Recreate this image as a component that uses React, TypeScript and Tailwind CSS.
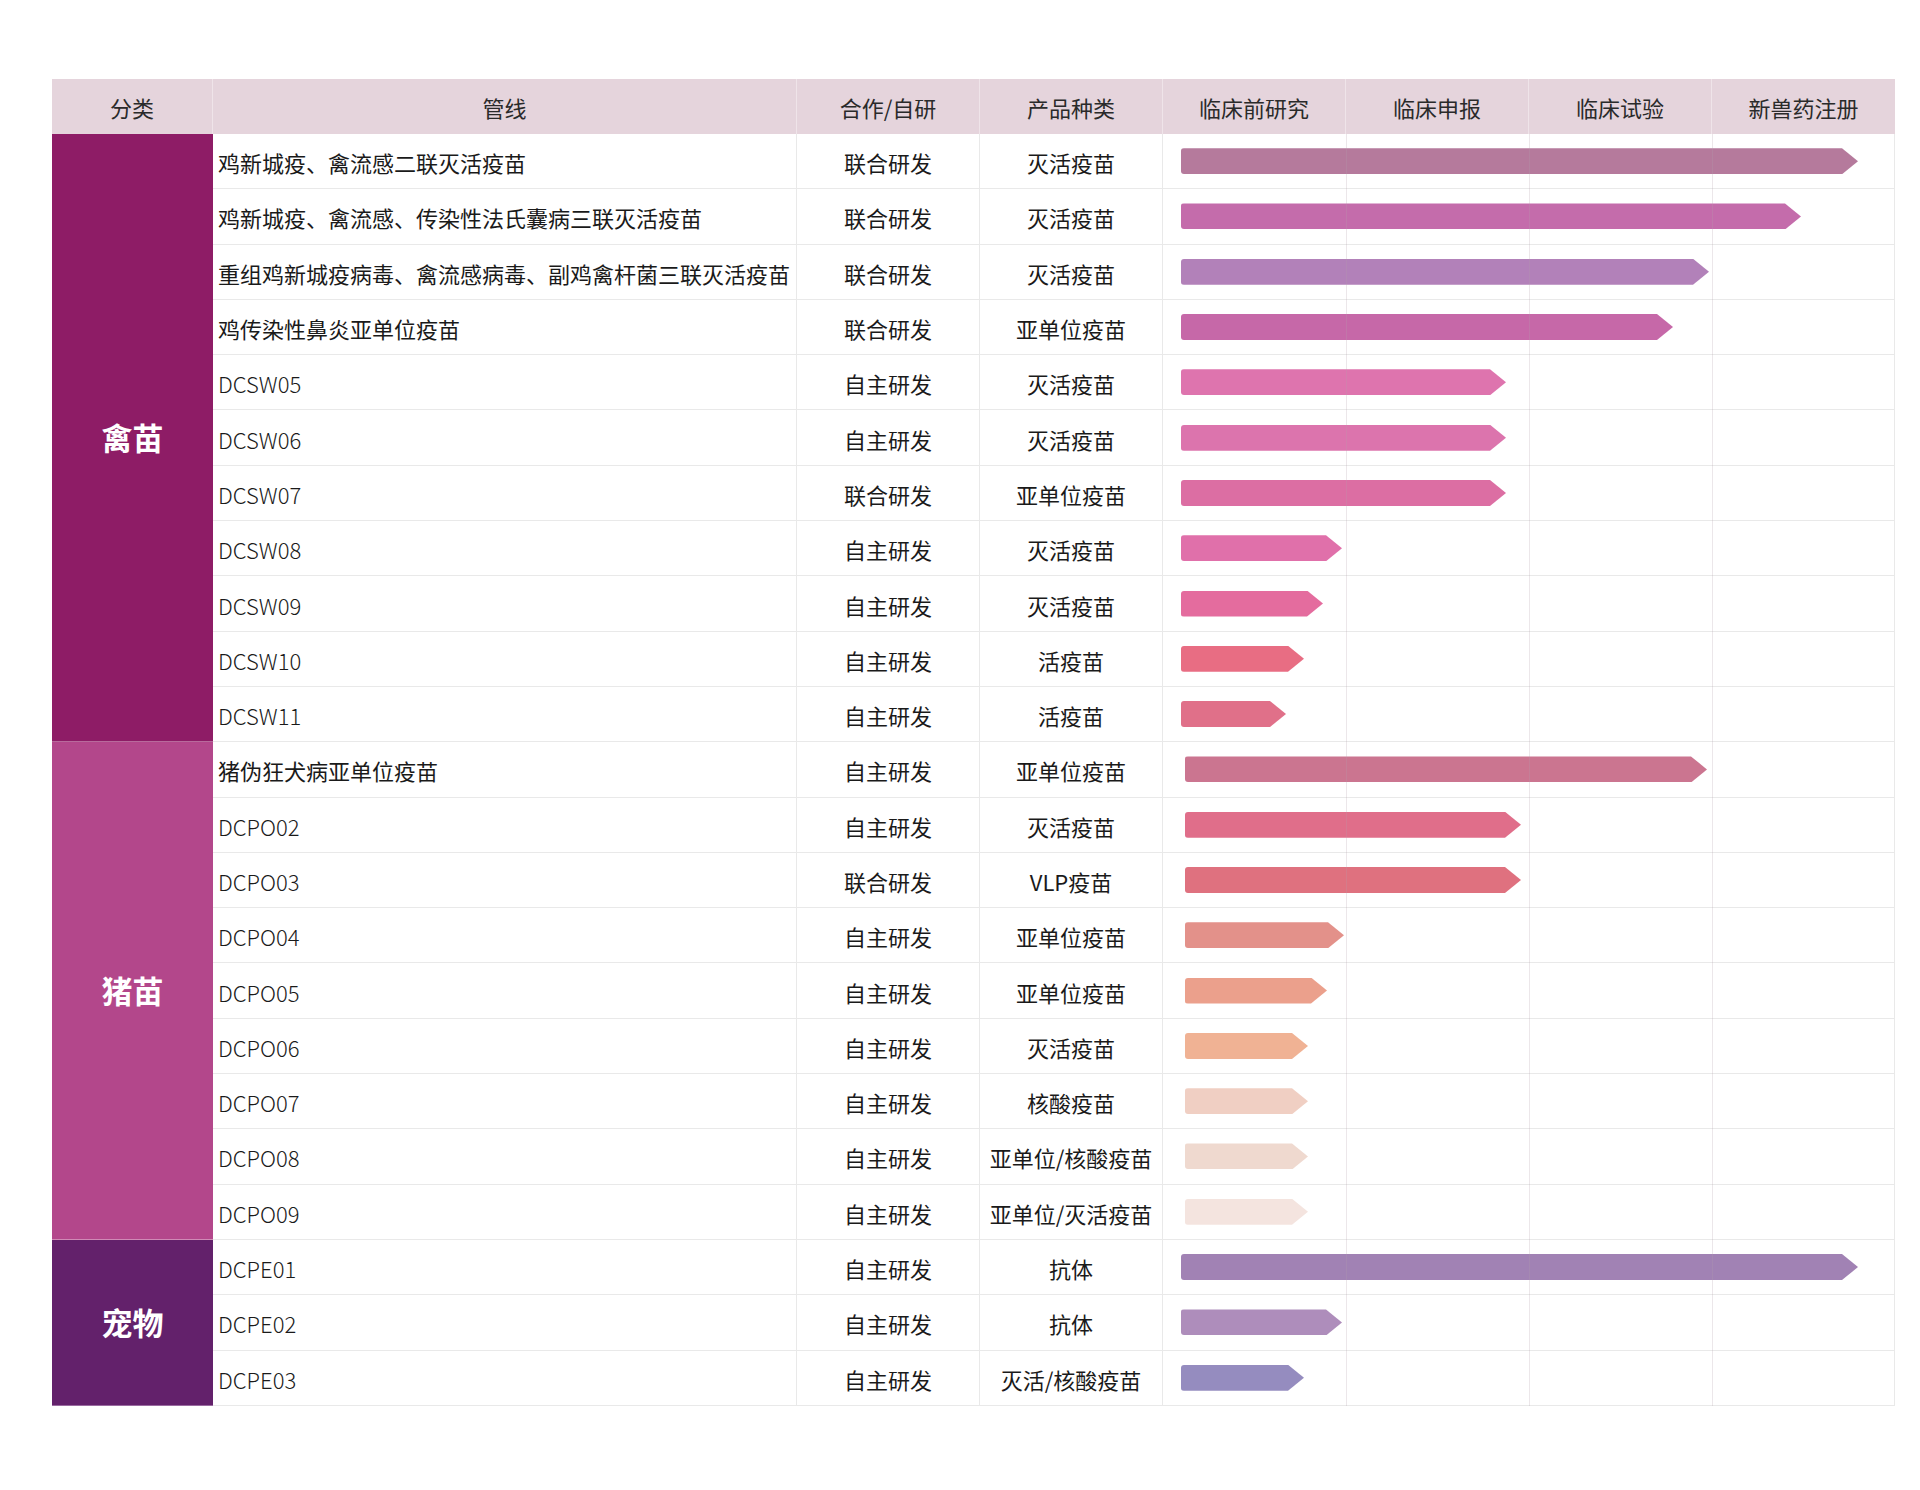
import React from "react";

type Row = { name: string; mode: string; kind: string; w: number; color: string };

const poultry: Row[] = [
  { name: "鸡新城疫、禽流感二联灭活疫苗", mode: "联合研发", kind: "灭活疫苗", w: 677, color: "#b57a9c" },
  { name: "鸡新城疫、禽流感、传染性法氏囊病三联灭活疫苗", mode: "联合研发", kind: "灭活疫苗", w: 620, color: "#c46cab" },
  { name: "重组鸡新城疫病毒、禽流感病毒、副鸡禽杆菌三联灭活疫苗", mode: "联合研发", kind: "灭活疫苗", w: 528, color: "#b281b9" },
  { name: "鸡传染性鼻炎亚单位疫苗", mode: "联合研发", kind: "亚单位疫苗", w: 492, color: "#c668a8" },
  { name: "DCSW05", mode: "自主研发", kind: "灭活疫苗", w: 325, color: "#de74ae" },
  { name: "DCSW06", mode: "自主研发", kind: "灭活疫苗", w: 325, color: "#dc74ad" },
  { name: "DCSW07", mode: "联合研发", kind: "亚单位疫苗", w: 325, color: "#dc6ea3" },
  { name: "DCSW08", mode: "自主研发", kind: "灭活疫苗", w: 161, color: "#e070aa" },
  { name: "DCSW09", mode: "自主研发", kind: "灭活疫苗", w: 142, color: "#e46c9e" },
  { name: "DCSW10", mode: "自主研发", kind: "活疫苗", w: 123, color: "#e86d83" },
  { name: "DCSW11", mode: "自主研发", kind: "活疫苗", w: 105, color: "#e07089" },
];

const pig: Row[] = [
  { name: "猪伪狂犬病亚单位疫苗", mode: "自主研发", kind: "亚单位疫苗", w: 522, color: "#cb7590" },
  { name: "DCPO02", mode: "自主研发", kind: "灭活疫苗", w: 336, color: "#e06e8a" },
  { name: "DCPO03", mode: "联合研发", kind: "VLP疫苗", w: 336, color: "#df717f" },
  { name: "DCPO04", mode: "自主研发", kind: "亚单位疫苗", w: 159, color: "#e3918a" },
  { name: "DCPO05", mode: "自主研发", kind: "亚单位疫苗", w: 142, color: "#eba08c" },
  { name: "DCPO06", mode: "自主研发", kind: "灭活疫苗", w: 123, color: "#f0b294" },
  { name: "DCPO07", mode: "自主研发", kind: "核酸疫苗", w: 123, color: "#f0cfc3" },
  { name: "DCPO08", mode: "自主研发", kind: "亚单位/核酸疫苗", w: 123, color: "#efd9cf" },
  { name: "DCPO09", mode: "自主研发", kind: "亚单位/灭活疫苗", w: 123, color: "#f4e4df" },
];

const pet: Row[] = [
  { name: "DCPE01", mode: "自主研发", kind: "抗体", w: 677, color: "#a182b4" },
  { name: "DCPE02", mode: "自主研发", kind: "抗体", w: 161, color: "#ae8dbb" },
  { name: "DCPE03", mode: "自主研发", kind: "灭活/核酸疫苗", w: 123, color: "#958cbf" },
];

const cellBase = "flex items-center border-b border-r border-[#e9e9e9] bg-white";
const txt = "pt-[3px] text-[22px] text-[#1a1a1a] whitespace-nowrap";

function Bar({ w, color }: { w: number; color: string }) {
  return (
    <div
      className="h-[26px] rounded-l-[3px] [clip-path:polygon(0_0,calc(100%-16px)_0,100%_50%,calc(100%-16px)_100%,0_100%)]"
      style={{ width: w, backgroundColor: color }}
    />
  );
}

function Rows({ rows, pad }: { rows: Row[]; pad: string }) {
  return (
    <>
      {rows.map((r, i) => (
        <React.Fragment key={i}>
          <div className={`${cellBase} ${txt} col-start-2 pl-[5px] ${r.name.startsWith("DC") ? "font-light" : "font-normal"}`}>{r.name}</div>
          <div className={`${cellBase} ${txt} col-start-3 justify-center font-normal`}>{r.mode}</div>
          <div className={`${cellBase} ${txt} col-start-4 justify-center font-normal`}>{r.kind}</div>
          <div className={`${cellBase} col-start-5 col-span-4 ${pad}`}>
            <Bar w={r.w} color={r.color} />
          </div>
        </React.Fragment>
      ))}
    </>
  );
}

export default function App() {
  const font = "font-['Noto_Sans_CJK_SC','Noto_Sans',sans-serif]";
  const head = "flex items-center justify-center pt-[2px] bg-[#e5d4dc] border-r border-[#efe4e9] text-[22px] font-normal text-[#2a2a2a]";
  const cat = "col-start-1 flex items-center justify-center text-[31px] font-bold text-white";
  return (
    <div className={`min-h-[1490px] w-[1920px] bg-white pt-[79px] pl-[52px] ${font}`}>
      <div className="relative w-[1843px] grid grid-cols-[161px_584px_183px_183px_183px_183px_183px_183px] grid-rows-[55px] auto-rows-[55.3px]">
        <div className={head}>分类</div>
        <div className={head}>管线</div>
        <div className={head}>合作/自研</div>
        <div className={head}>产品种类</div>
        <div className={head}>临床前研究</div>
        <div className={head}>临床申报</div>
        <div className={head}>临床试验</div>
        <div className={`${head} border-r-0`}>新兽药注册</div>

        <div className={`${cat} row-span-11 bg-[#8e1c66] border-b border-[#b86a9c]`}>禽苗</div>
        <Rows rows={poultry} pad="pl-[18px]" />
        <div className={`${cat} row-span-9 bg-[#b3478b] border-b border-[#d08ab6]`}>猪苗</div>
        <Rows rows={pig} pad="pl-[22px]" />
        <div className={`${cat} row-span-3 bg-[#63216b] border-b border-[#9a6aa0]`}>宠物</div>
        <Rows rows={pet} pad="pl-[18px]" />

        <div className="pointer-events-none absolute top-[55px] bottom-0 left-[1294px] w-px bg-[#b4a0aa]/25" />
        <div className="pointer-events-none absolute top-[55px] bottom-0 left-[1477px] w-px bg-[#b4a0aa]/25" />
        <div className="pointer-events-none absolute top-[55px] bottom-0 left-[1660px] w-px bg-[#b4a0aa]/25" />
      </div>
    </div>
  );
}
